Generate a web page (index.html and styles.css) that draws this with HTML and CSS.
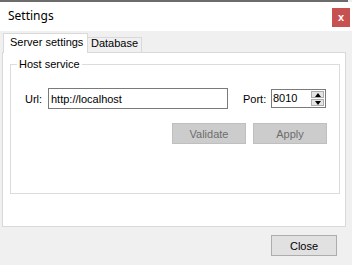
FILE: index.html
```html
<!DOCTYPE html>
<html lang="en">
<head>
    <meta charset="UTF-8">
    <title>Settings</title>
    <link rel="stylesheet" href="styles.css">
</head>
<body>

    <div class="window">

        <div class="frame-top"></div>

        <header class="titlebar">
            <span class="title">Settings</span>
            <button class="btn-close-x">x</button>
        </header>

        <div class="window-body">

            <div class="tabs">
                <div class="tab tab-active">Server settings</div>
                <div class="tab">Database</div>
            </div>

            <div class="tab-panel">
                <fieldset class="group">
                    <legend>Host service</legend>

                    <div class="field-row">
                        <label class="lbl-url">Url:</label>
                        <input class="txt-url" type="text" value="http://localhost">
                        <label class="lbl-port">Port:</label>
                        <div class="spin">
                            <span class="spin-value">8010</span>
                            <div class="spin-buttons">
                                <span class="spin-btn"><span class="arrow-up"></span></span>
                                <span class="spin-btn"><span class="arrow-down"></span></span>
                            </div>
                        </div>
                    </div>

                    <div class="actions">
                        <button class="btn btn-disabled">Validate</button>
                        <button class="btn btn-disabled">Apply</button>
                    </div>
                </fieldset>
            </div>

            <footer class="dialog-footer">
                <button class="btn btn-close">Close</button>
            </footer>

        </div>
    </div>

</body>
</html>
```

FILE: styles.css
```css
/* Basic setup */
* {
    margin: 0;
    padding: 0;
    box-sizing: border-box;
}

body {
    background: #f0f0f0;
    font-family: 'Liberation Sans', Arial, sans-serif;
    font-size: 11px;
    color: #000000;
}

/* Dialog window */
.window {
    width: 352px;
    height: 265px;
    display: flex;
    flex-direction: column;
    background: #f0f0f0;
}

.frame-top {
    width: 348px;
    height: 2px;
    background: #6b6b6b;
}

/* Title bar */
.titlebar {
    height: 29px;
    display: flex;
    align-items: flex-start;
    justify-content: space-between;
    background: #ffffff;
    flex-shrink: 0;
}

.title {
    font-family: 'Noto Sans', sans-serif;
    font-size: 12px;
    line-height: 16px;
    margin: 6px 0 0 8px;
}

.btn-close-x {
    width: 18px;
    height: 19px;
    margin: 6px 2px 0 0;
    border: none;
    background: #c75050;
    color: #ffffff;
    font-family: 'Liberation Sans', sans-serif;
    font-weight: 700;
    font-size: 11px;
    line-height: 17px;
}

/* Tabs */
.window-body {
    flex-grow: 1;
    display: flex;
    flex-direction: column;
}

.tabs {
    display: flex;
    align-items: flex-end;
    margin-top: 2px;
    padding-left: 3px;
    position: relative;
    z-index: 1;
}

.tab {
    height: 15px;
    width: 54px;
    padding-left: 3px;
    line-height: 11px;
    border: 1px solid #d9d9d9;
    border-left: none;
    border-bottom: none;
    background: #f0f0f0;
    white-space: nowrap;
}

.tab-active {
    height: 20px;
    width: 85px;
    padding: 2px 0 0 6px;
    line-height: 13px;
    border-left: 1px solid #d9d9d9;
    background: #ffffff;
    margin-bottom: -1px;
}

.tab-panel {
    width: 344px;
    height: 175px;
    margin-left: 2px;
    padding: 5px 0 0 7px;
    border: 1px solid #d9d9d9;
    background: #ffffff;
}

/* Group box */
.group {
    width: 330px;
    height: 136px;
    padding: 0;
    border: 1px solid #dcdcdc;
}

.group legend {
    margin-left: 6px;
    padding: 0 2px;
    line-height: 12px;
}

.field-row {
    display: flex;
    align-items: center;
    height: 21px;
    margin-top: 18px;
    padding-left: 14px;
}

.lbl-url {
    width: 23px;
}

.txt-url {
    width: 180px;
    height: 21px;
    padding-left: 2px;
    border: 1px solid #7a7a7a;
    font-family: 'Liberation Sans', Arial, sans-serif;
    font-size: 11px;
    color: #000000;
    outline: none;
}

.lbl-port {
    width: 28px;
    margin-left: 15px;
}

/* Numeric up-down */
.spin {
    width: 55px;
    height: 19px;
    display: flex;
    justify-content: space-between;
    border: 1px solid #7a7a7a;
    background: #ffffff;
}

.spin-value {
    padding: 1px 0 0 1px;
    line-height: 14px;
}

.spin-buttons {
    display: flex;
    flex-direction: column;
    width: 15px;
    padding: 1px;
    gap: 1px;
}

.spin-btn {
    flex: 1;
    display: flex;
    align-items: center;
    justify-content: center;
    background: #e5e5e5;
    border: 1px solid #acacac;
}

.arrow-up,
.arrow-down {
    width: 0;
    height: 0;
    border-left: 3px solid transparent;
    border-right: 3px solid transparent;
}

.arrow-up {
    border-bottom: 4px solid #000000;
}

.arrow-down {
    border-top: 4px solid #000000;
}

/* Buttons */
.actions {
    display: flex;
    justify-content: flex-end;
    gap: 7px;
    margin-top: 14px;
    padding-right: 12px;
}

.btn {
    height: 21px;
    font-family: 'Liberation Sans', Arial, sans-serif;
    font-size: 11px;
}

.btn-disabled {
    width: 74px;
    background: #cccccc;
    border: 1px solid #bfbfbf;
    color: #6d6d6d;
}

.dialog-footer {
    display: flex;
    justify-content: flex-end;
    margin-top: 8px;
    padding-right: 15px;
}

.btn-close {
    width: 66px;
    background: #e1e1e1;
    border: 1px solid #adadad;
    color: #000000;
}
```
